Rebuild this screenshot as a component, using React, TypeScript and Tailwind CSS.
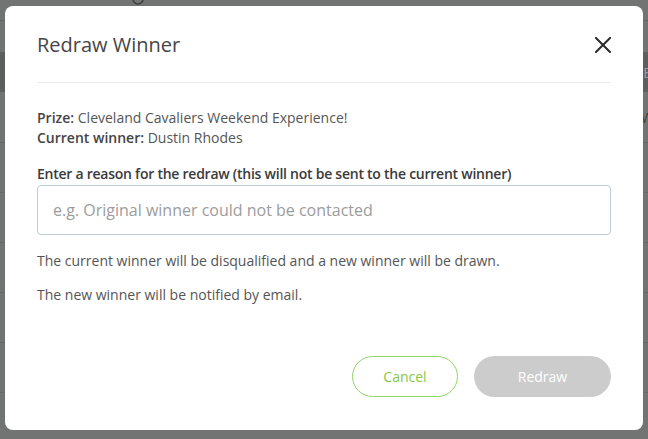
const rows = [0, 1, 2, 3, 4, 5]

export default function App() {
  return (
    <div className="relative h-[439px] w-[648px] overflow-hidden bg-[#727474] font-['Open_Sans',sans-serif]">
      {/* Page behind the overlay */}
      <div className="relative h-[21px] border-b border-[#656767]">
        <svg className="absolute left-[131px] top-[-8px]" width="14" height="14" viewBox="0 0 14 14" fill="none">
          <circle cx="7" cy="7" r="5" stroke="#3f4141" strokeWidth="1.6" />
        </svg>
      </div>
      <div className="h-[31px]" />
      <div className="flex h-[40px] items-center justify-end bg-[#5d5f5f] text-[14px] text-[#9a9c9c]">
        <span className="translate-x-[3px]">E</span>
      </div>
      <div className="flex h-[51px] items-center justify-end border-b border-[#676969] text-[14px] text-[#4a3f2e]">
        <span className="translate-x-[6px]">W</span>
      </div>
      {rows.map((r) => (
        <div key={r} className="h-[50px] border-b border-[#676969]" />
      ))}

      {/* Modal */}
      <div className="absolute left-[5px] top-[6px] h-[424px] w-[638px] rounded-[8px] bg-white px-8">
        <div className="flex items-center justify-between border-b border-[#ececec] pb-[23px] pt-[25px]">
          <h2 className="text-[20px] leading-7 text-[#464646]">Redraw Winner</h2>
          <svg width="16" height="16" viewBox="0 0 16 16" className="text-[#2b2b2b]">
            <path d="M1 1L15 15M15 1L1 15" stroke="currentColor" strokeWidth="2" strokeLinecap="square" />
          </svg>
        </div>

        <div className="pt-[25px] text-[14px] leading-5 text-[#555]">
          <p>
            <span className="font-semibold text-[#444]">Prize:</span> Cleveland Cavaliers Weekend Experience!
          </p>
          <p>
            <span className="font-semibold text-[#444]">Current winner:</span> Dustin Rhodes
          </p>
        </div>

        <label className="mt-4 block text-[14px] font-semibold leading-5 tracking-[-0.25px] text-[#3a3a3a]">
          Enter a reason for the redraw (this will not be sent to the current winner)
        </label>
        <input
          type="text"
          placeholder="e.g. Original winner could not be contacted"
          className="mt-px box-border block h-[50px] w-full rounded-[4px] border border-[#bccadb] px-[15px] text-[16px] text-[#555] outline-none placeholder:text-[#9c9c9c]"
        />

        <p className="mt-4 text-[14px] leading-5 text-[#555]">
          The current winner will be disqualified and a new winner will be drawn.
        </p>
        <p className="mt-[14px] text-[14px] leading-5 text-[#555]">The new winner will be notified by email.</p>

        <div className="mt-[51px] flex justify-end gap-4">
          <button className="h-[41px] w-[106px] rounded-full border border-[#8fd564] bg-white text-[14px] text-[#86c84a]">
            Cancel
          </button>
          <button className="h-[41px] w-[137px] rounded-full bg-[#cccccc] text-[14px] text-white">Redraw</button>
        </div>
      </div>
    </div>
  )
}
